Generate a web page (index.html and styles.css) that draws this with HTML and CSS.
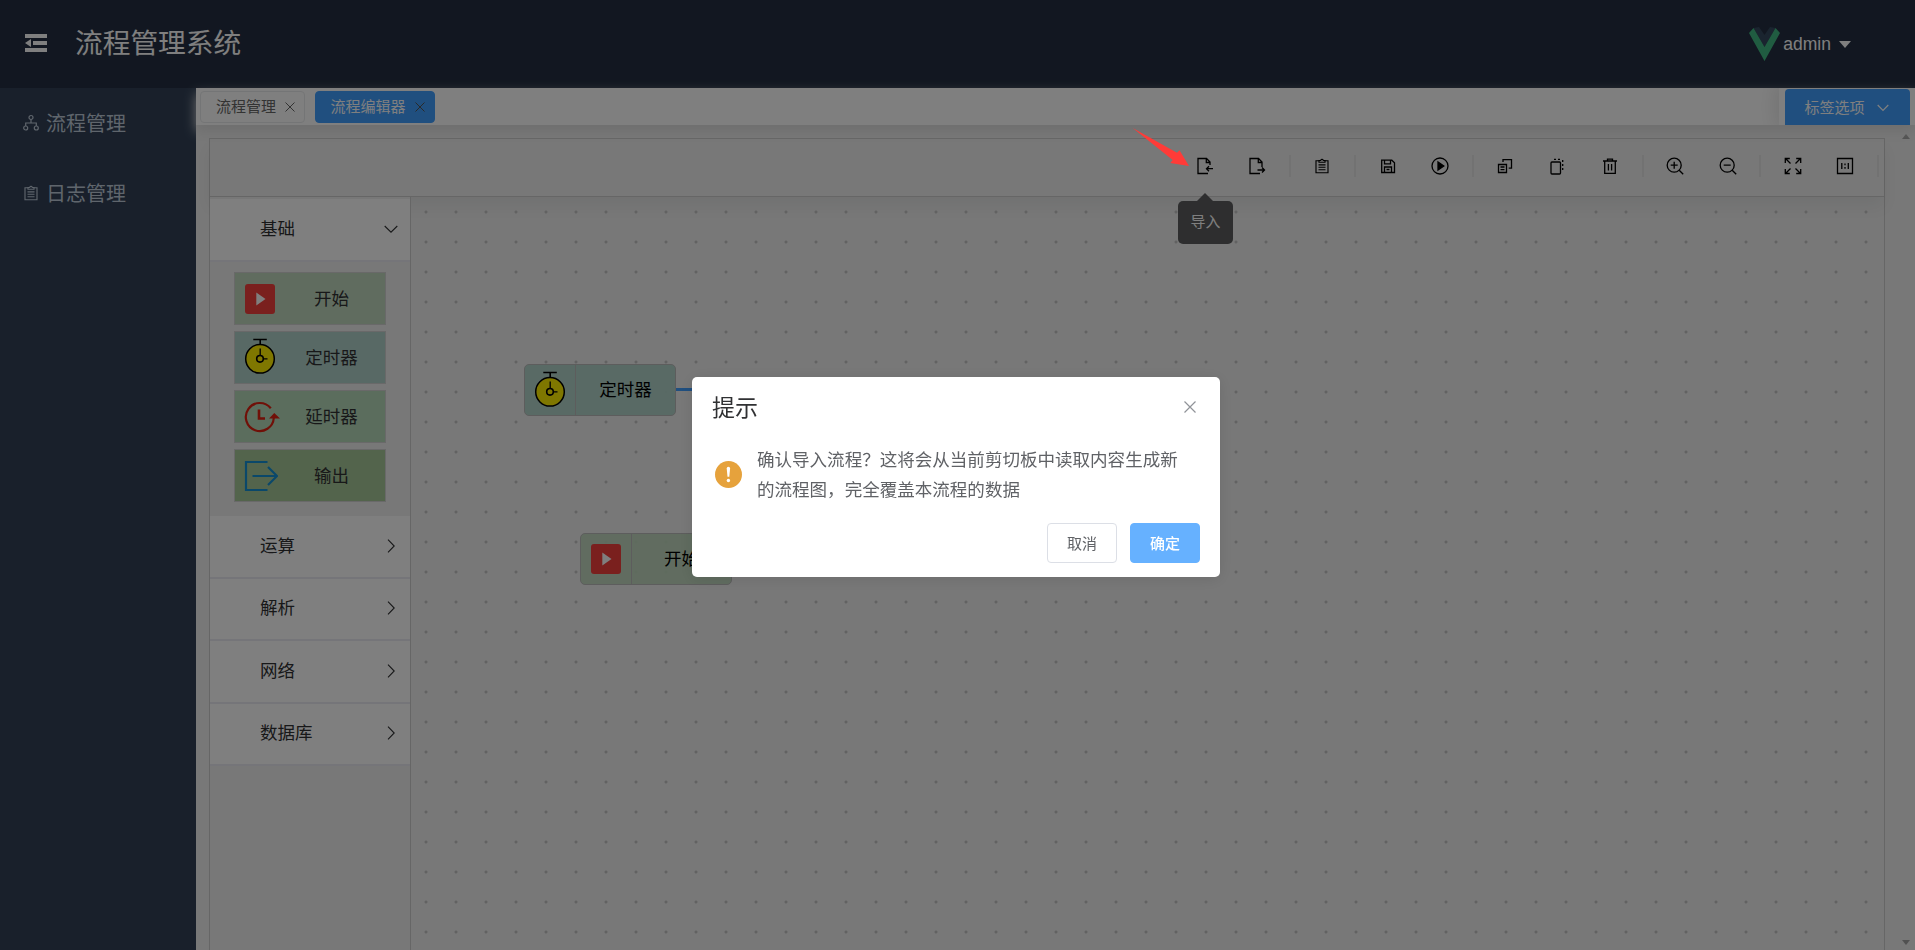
FILE: index.html
```html
<!DOCTYPE html>
<html lang="zh-CN">
<head>
<meta charset="utf-8">
<title>流程管理系统</title>
<link rel="stylesheet" href="styles.css">
</head>
<body>
<svg class="defs" aria-hidden="true">
  <symbol id="start" viewBox="0 0 36 36"><rect x="3" y="3" width="30" height="30" rx="3" fill="#f5403c"/><path d="M14.3 11.500v13l9.200-6.500z" fill="#fff"/></symbol>
  <symbol id="timer" viewBox="0 0 36 36" overflow="visible"><path d="M11.300-.500h13.500M18.200-.5v5" stroke="#000" stroke-width="1.600" fill="none"/><circle cx="18" cy="18.800" r="14.300" fill="#ffee00" stroke="#000" stroke-width="1.500"/><circle cx="18" cy="18.800" r="3.300" fill="none" stroke="#000" stroke-width="1.600"/><path d="M18.200 15.500V8.500M21.300 18.800h4.200" stroke="#000" stroke-width="1.300"/></symbol>
  <symbol id="delay" viewBox="0 0 36 36" overflow="visible"><path d="M28.800 9.300A14 14 0 1 0 31.800 19" fill="none" stroke="#e02010" stroke-width="2.200"/><path d="M27 19.500 32.300 14l5.700 5.500z" fill="#e02010"/><path d="M17 10.500v9h6" fill="none" stroke="#e02010" stroke-width="2.600"/></symbol>
  <symbol id="output" viewBox="0 0 36 36"><path d="M25.500 4H4v28h21.500M10.500 18h24M26 9l9 9-9 9" fill="none" stroke="#1590d4" stroke-width="2.200"/></symbol>
  <symbol id="clipboard" viewBox="0 0 16 16"><path d="M5 2.700H2v12h12v-12h-3M5 4.200V2.500h1.500Q8 .3 9.500 2.500H11v1.700zM4.500 6.800h7M4.500 9.200h7M4.500 11.700h7" fill="none" stroke="currentColor" stroke-width="1.150"/></symbol>
</svg>
<div class="app">
  <header class="header">
    <svg class="fold" viewBox="0 0 22 18"><path d="M0 0h22v4H0zM8 7h14v4H8zM0 14h22v4H0zM0 9l6-4v8z" fill="currentColor"/></svg>
    <h1 class="brand">流程管理系统</h1>
    <div class="user">
      <svg class="avatar" viewBox="0 0 31 34"><path d="M4.500 1 10 0l5.500 8L21 0l5.500 1-11 19z" fill="#35495e"/><path d="M0 6l4.500-5 11 19 11-19L31 6 15.500 34z" fill="#41b883"/></svg>
      <span>admin</span><i class="caret"></i>
    </div>
  </header>
  <div class="body">
    <nav class="sidebar">
      <a class="menu"><svg viewBox="0 0 16 16"><g fill="none" stroke="currentColor" stroke-width="1.200"><circle cx="8" cy="2.500" r="2"/><circle cx="2.700" cy="13" r="2"/><circle cx="13.300" cy="13" r="2"/><path d="M8 4.500v3.500M2.700 11V8h10.600v3"/></g></svg><span>流程管理</span></a>
      <a class="menu"><svg viewBox="0 0 16 16"><use href="#clipboard"/></svg><span>日志管理</span></a>
    </nav>
    <main class="main">
      <div class="tags">
        <div class="tag"><span>流程管理</span><svg viewBox="0 0 10 10"><path d="M.5.5l9 9M9.500.5l-9 9" stroke="currentColor"/></svg></div>
        <div class="tag active"><span>流程编辑器</span><svg viewBox="0 0 10 10"><path d="M.5.5l9 9M9.500.5l-9 9" stroke="currentColor"/></svg></div>
        <div class="tag-tools"><button class="tag-button"><span>标签选项</span><svg viewBox="0 0 12 8"><path d="M.7 1 6 6.500 11.300 1" fill="none" stroke="currentColor" stroke-width="1.200"/></svg></button></div>
      </div>
      <div class="content">
        <section class="editor">
          <div class="toolbar">
            <button class="tool"><svg viewBox="0 0 18 18"><path d="M12 16.500H2v-15h8.500L14 5v3M10.300 1.500v4H14M17 11.700h-6M13 9.200l-2.500 2.500 2.500 2.500"/></svg></button>
            <button class="tool"><svg viewBox="0 0 18 18"><path d="M12 16.500H2v-15h8.500L14 5v5M10.300 1.500v4H14M9.500 13h7M14 10.500l2.500 2.500-2.500 2.500"/></svg></button>
            <i class="sep"></i>
            <button class="tool"><svg viewBox="0 0 18 18"><use href="#clipboard" x="1" y="1" width="16" height="16"/></svg></button>
            <i class="sep"></i>
            <button class="tool"><svg viewBox="0 0 18 18"><path d="M2.700 3.200h10.100l2.700 2.500v9.800H2.700zM5.500 3.200v3.600h6V3.200M5.500 15.500V10h7v5.500M7.500 12.500h3"/></svg></button>
            <button class="tool"><svg viewBox="0 0 18 18"><circle cx="9" cy="9" r="8"/><path d="M7 5v8l5.800-4z" fill="currentColor"/></svg></button>
            <i class="sep"></i>
            <button class="tool"><svg viewBox="0 0 18 18"><path d="M2.500 7.500h8v8h-8zM7 5V2.700h8.500v8.500H12.700M4.500 10h4M4.500 12.700h4"/></svg></button>
            <button class="tool"><svg viewBox="0 0 18 18"><rect x="2" y="5" width="9.500" height="12" rx="1"/><path d="M5 2.300h2M9 2.300h2M13.700 3v2M13.700 7v2M13.700 11v2"/></svg></button>
            <button class="tool"><svg viewBox="0 0 18 18"><path d="M2 4h14M6.500 3.700V2.200h5v1.500M3.700 4v12.300h10.600V4M7.400 7v6.500M10.600 7v6.500"/></svg></button>
            <i class="sep"></i>
            <button class="tool"><svg viewBox="0 0 18 18"><circle cx="8.200" cy="8.200" r="7"/><path d="M13.200 13.200l4 4M4.700 8.200h7M8.200 4.700v7"/></svg></button>
            <button class="tool"><svg viewBox="0 0 18 18"><circle cx="8.200" cy="8.200" r="7"/><path d="M13.200 13.200l4 4M4.700 8.200h7"/></svg></button>
            <i class="sep"></i>
            <button class="tool"><svg viewBox="0 0 18 18"><path d="M1.300 6V1.500h4.500M1.500 1.500l5 5M16.700 6V1.500h-4.500M16.500 1.500l-5 5M1.300 12v4.500h4.500M1.500 16.500l5-5M16.700 12v4.500h-4.500M16.500 16.500l-5-5"/></svg></button>
            <button class="tool"><svg viewBox="0 0 18 18"><path d="M1.500 1.500h15v15h-15zM5.800 6v6M12.300 6v6M9 6.500v1.800M9 10v1.800"/></svg></button>
            <i class="sep"></i>
          </div>
          <div class="workspace">
            <aside class="palette">
              <div class="group"><span>基础</span><svg viewBox="0 0 14 14"><path d="M.7 4 7 10.200 13.300 4"/></svg></div>
              <div class="items">
                <div class="item green"><svg><use href="#start"/></svg><span>开始</span></div>
                <div class="item teal"><svg><use href="#timer"/></svg><span>定时器</span></div>
                <div class="item mint"><svg><use href="#delay"/></svg><span>延时器</span></div>
                <div class="item olive"><svg><use href="#output"/></svg><span>输出</span></div>
              </div>
              <div class="group"><span>运算</span><svg viewBox="0 0 14 14"><path d="M4 .7 10.200 7 4 13.300"/></svg></div>
              <div class="group"><span>解析</span><svg viewBox="0 0 14 14"><path d="M4 .7 10.200 7 4 13.300"/></svg></div>
              <div class="group"><span>网络</span><svg viewBox="0 0 14 14"><path d="M4 .7 10.200 7 4 13.300"/></svg></div>
              <div class="group"><span>数据库</span><svg viewBox="0 0 14 14"><path d="M4 .7 10.200 7 4 13.300"/></svg></div>
            </aside>
            <div class="canvas">
              <i class="edge"></i>
              <div class="node node-timer"><div class="node-icon"><svg><use href="#timer"/></svg></div><span>定时器</span></div>
              <div class="node node-start"><div class="node-icon"><svg><use href="#start"/></svg></div><span>开始</span></div>
            </div>
          </div>
        </section>
        <div class="scrollbar"><i class="up"></i><i class="down"></i></div>
      </div>
    </main>
  </div>
</div>
<div class="tooltip">导入</div>
<div class="overlay">
  <div class="dialog">
    <div class="dialog-head"><h2>提示</h2><svg viewBox="0 0 12 12"><path d="M.5.5l11 11M11.500.5l-11 11" stroke="currentColor" stroke-width="1.200"/></svg></div>
    <div class="dialog-body">
      <svg class="warn" viewBox="0 0 27 27"><circle cx="13.500" cy="13.500" r="13.500" fill="#e6a23c"/><path d="M11.700 7.500a1.700 1.700 0 0 1 3.400 0l-.8 8.200h-1.800z" fill="#fff"/><circle cx="13.400" cy="19.500" r="1.700" fill="#fff"/></svg>
      <p>确认导入流程？这将会从当前剪切板中读取内容生成新的流程图，完全覆盖本流程的数据</p>
    </div>
    <div class="dialog-foot"><button class="btn">取消</button><button class="btn primary">确定</button></div>
  </div>
</div>
<svg class="pointer" viewBox="0 0 58 40"><path d="M.7 0 45 24.700l2.500-2.400L57 38l-18.700-3 2.400-3z" fill="#ff3b38"/></svg>
</body>
</html>
```
FILE: styles.css
```css
* { box-sizing: border-box; }
body { margin: 0; height: 950px; overflow: hidden; font-family: "Liberation Sans", "Noto Sans CJK SC", sans-serif; font-weight: 400; color: #303133; }
button { font: inherit; border: 0; padding: 0; background: none; }
svg { display: block; flex: none; overflow: visible; }
.defs { position: absolute; width: 0; height: 0; }
.app { display: flex; flex-direction: column; height: 950px; }

.header { flex: none; display: flex; align-items: center; height: 88px; padding: 0 64px 0 25px; background: #242f42; color: #fff; }
.fold { width: 22px; height: 18px; margin-top: -2px; }
.brand { margin: 0 0 0 28px; font-size: 27.7px; font-weight: 400; line-height: 88px; }
.user { display: flex; align-items: center; margin-left: auto; font-size: 17.5px; }
.avatar { width: 31px; height: 34px; margin: -1px 3px 0 0; }
.caret { margin-left: 8px; border: 6px solid transparent; border-top: 7px solid #fff; border-bottom: 0; }

.body { flex: 1; display: flex; min-height: 0; }
.sidebar { flex: none; width: 196px; background: #324157; color: #bfcbd9; }
.menu { display: flex; align-items: center; height: 70px; padding-left: 23px; font-size: 20px; }
.menu svg { width: 16px; height: 16px; margin-right: 7px; }
.menu span { padding-bottom: 2px; }
.main { flex: 1; display: flex; flex-direction: column; min-width: 0; background: #f0f0f0; }

.tags { position: relative; flex: none; display: flex; gap: 10px; height: 37px; padding: 3px 0 0 4px; background: #fff; box-shadow: 0 6px 12px #ddd; }
.tag { display: flex; align-items: center; height: 32px; padding: 0 9px 0 15px; border: 1px solid #e9eaec; border-radius: 4px; font-size: 15px; color: #666; }
.tag span { padding-bottom: 3px; }
.tag svg { width: 10px; height: 10px; margin-left: 9px; }
.tag.active { padding-left: 14.5px; background: #409eff; border-color: #409eff; color: #fff; }
.tag.active svg { margin-left: 9.5px; color: #555; }
.tag-tools { width: 136px; height: 37px; margin: -3px 0 0 auto; padding: 1px 5px 0 6px; background: #fff; box-shadow: 0 0 19px 4px rgba(0,0,0,.1); clip-path: inset(0 0 0 -30px); }
.tag-button { display: flex; align-items: center; width: 125px; height: 36px; padding: 2px 0 0 19.5px; border-radius: 4px 4px 0 0; background: #409eff; color: #fff; font-size: 15px; }
.tag-button span { padding-bottom: 3px; }
.tag-button svg { width: 12px; height: 8px; margin-left: 12.5px; }

.content { flex: 1; display: flex; min-height: 0; padding: 13px 0 0 13px; }
.editor { display: flex; flex-direction: column; width: 1676px; border: 1px solid #ccc; border-bottom: 0; }
.toolbar { position: relative; flex: none; display: flex; align-items: center; justify-content: flex-end; height: 58px; padding: 0 0 3px; border-bottom: 1px solid #ccc; box-shadow: 0 10px 15px rgba(0,30,30,.055); color: #000; }
.tool { display: flex; align-items: center; justify-content: center; width: 52.5px; height: 40px; }
.tool svg { width: 18px; height: 18px; fill: none; stroke: currentColor; stroke-width: 1.3; }
.tool:nth-child(-n+4) svg { margin-left: -1px; }
.sep { display: flex; justify-content: center; width: 12.5px; height: 22px; }
.sep::before { content: ""; width: 2px; background: #e4e4e4; }
.workspace { flex: 1; display: flex; min-height: 0; }
.palette { position: relative; flex: none; width: 201px; padding-top: 2px; border-right: 1px solid #ccc; background: #f0f0f0; }
.group { display: flex; align-items: center; justify-content: space-between; height: 62.5px; padding: 0 12px 0 50px; border-bottom: 2px solid #ebebf2; background: #fff; font-size: 17.5px; }
.group span { padding-bottom: 4px; }
.group svg { width: 14px; height: 14px; margin-top: -1px; fill: none; stroke: #303133; stroke-width: 1.1; }
.items { display: flex; flex-direction: column; gap: 6px; height: 254.5px; padding: 10.5px 24px 0; }
.item { display: flex; align-items: center; width: 152px; height: 53px; border: 1px solid #d2d2d2; padding-left: 7px; font-size: 17.5px; }
.item svg { width: 36px; height: 36px; }
.item span { flex: 1; text-align: center; padding: 0 0 3px; }
.green { background: #c0d8be; }
.teal { background: #b1d3ca; }
.mint { background: #b6dabb; }
.olive { background: #a7c899; }

.canvas { position: relative; flex: 1; background: radial-gradient(circle at 15px 15px, #c4c4c4 .9px, rgba(196,196,196,0) 2px) 0 0 / 30px 30px; color: #000; }
.node { position: absolute; display: flex; width: 152px; height: 52px; border: 1px solid #bbb; border-radius: 5px; font-size: 17.5px; }
.node-icon { display: flex; align-items: center; justify-content: center; width: 51px; border-right: 1px solid #bbb; }
.node-icon svg { width: 36px; height: 36px; }
.node-timer .node-icon svg { margin-top: 2px; }
.node span { flex: 1; text-align: center; line-height: 51px; }
.node-timer { left: 113px; top: 167px; background: rgba(174,210,200,.92); }
.node-start { left: 169px; top: 336px; background: rgba(190,215,188,.92); }
.edge { position: absolute; left: 265px; top: 191px; width: 60px; height: 3px; background: #409eff; }

.scrollbar { display: flex; flex-direction: column; justify-content: space-between; margin: -4px 5px 5px auto; }
.up { border: 4.5px solid transparent; border-bottom: 5px solid #a3a3a3; border-top: 0; }
.down { border: 4.5px solid transparent; border-top: 5px solid #a3a3a3; border-bottom: 0; }

.tooltip { position: absolute; left: 1178px; top: 201px; width: 55px; height: 43px; border-radius: 5px; background: #5c5d5e; color: #fff; font-size: 15px; line-height: 42px; text-align: center; }
.tooltip::before { content: ""; position: absolute; left: 19px; top: -8px; border: 8.5px solid transparent; border-bottom: 8px solid #5c5d5e; border-top: 0; }

.overlay { position: fixed; inset: 0; background: rgba(0,0,0,.5); }
.dialog { position: absolute; left: 692px; top: 377px; width: 528px; height: 200px; border-radius: 5px; background: #fff; box-shadow: 0 2px 15px rgba(0,0,0,.1); }
.dialog-head { display: flex; align-items: center; justify-content: space-between; height: 60px; padding: 0 24px 0 20px; color: #909399; }
.dialog-head h2 { margin: 0; padding-bottom: 3px; font-size: 23px; font-weight: 400; color: #303133; }
.dialog-head svg { width: 12px; height: 12px; }
.dialog-body { display: flex; align-items: center; height: 75px; padding-left: 23px; color: #606266; }
.warn { width: 27px; height: 27px; }
.dialog-body p { width: 424px; margin: 0 0 0 15px; font-size: 17.55px; line-height: 30px; }
.dialog-foot { display: flex; justify-content: flex-end; gap: 13px; padding: 11px 20px 0; }
.btn { width: 70px; height: 40px; padding-bottom: 1px; border: 1px solid #dcdfe6; border-radius: 4px; background: #fff; color: #606266; font-size: 15px; }
.btn.primary { border-color: #66b1ff; background: #66b1ff; color: #fff; font-weight: 500; }
.pointer { position: absolute; left: 1132px; top: 128px; width: 58px; height: 40px; }
```
